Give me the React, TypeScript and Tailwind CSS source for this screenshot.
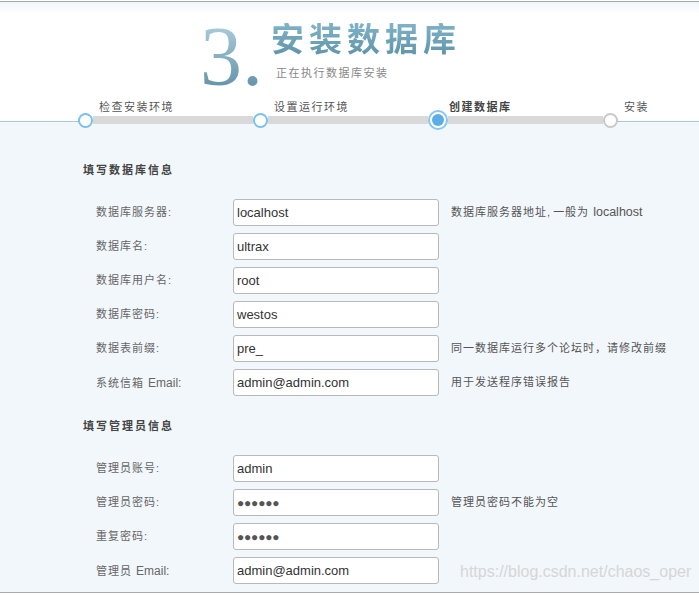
import React from 'react';

type Field = {
  label: React.ReactNode;
  value: string;
  password?: boolean;
  hint?: React.ReactNode;
};

const dbFields: Field[] = [
  {
    label: '数据库服务器:',
    value: 'localhost',
    hint: (
      <>
        数据库服务器地址<span className="tracking-normal">, </span>一般为{' '}
        <span className="text-[12.5px] tracking-normal">localhost</span>
      </>
    ),
  },
  { label: '数据库名:', value: 'ultrax' },
  { label: '数据库用户名:', value: 'root' },
  { label: '数据库密码:', value: 'westos' },
  { label: '数据表前缀:', value: 'pre_', hint: '同一数据库运行多个论坛时，请修改前缀' },
  {
    label: (
      <>
        系统信箱 <span className="text-[12px] tracking-normal">Email:</span>
      </>
    ),
    value: 'admin@admin.com',
    hint: '用于发送程序错误报告',
  },
];

const adminFields: Field[] = [
  { label: '管理员账号:', value: 'admin' },
  { label: '管理员密码:', value: '●●●●●●', password: true, hint: '管理员密码不能为空' },
  { label: '重复密码:', value: '●●●●●●', password: true },
  {
    label: (
      <>
        管理员 <span className="text-[12px] tracking-normal">Email:</span>
      </>
    ),
    value: 'admin@admin.com',
  },
];

const steps = [
  { label: '检查安装环境', current: false },
  { label: '设置运行环境', current: false },
  { label: '创建数据库', current: true },
  { label: '安装', current: false },
];

function FieldRow({ field }: { field: Field }) {
  return (
    <div className="flex h-[27px] items-center">
      <div className="w-[150px] shrink-0 pl-[13px] text-[11px] tracking-[1px] text-[#666]">{field.label}</div>
      <input
        readOnly
        type="text"
        defaultValue={field.value}
        className={
          field.password
            ? 'h-[27px] w-[206px] shrink-0 rounded-[3px] border border-[#b9b9b9] bg-white px-[3px] text-[12px] tracking-[-0.2px] text-[#555] outline-none'
            : 'h-[27px] w-[206px] shrink-0 rounded-[3px] border border-[#b9b9b9] bg-white px-[3px] text-[13px] text-[#333] outline-none'
        }
        style={{ fontFamily: '"Liberation Sans", "DejaVu Sans", Arial, sans-serif' }}
      />
      {field.hint && (
        <div className="ml-[12px] text-[11px] tracking-[1px] text-[#555]">{field.hint}</div>
      )}
    </div>
  );
}

function Section({ title, fields }: { title: string; fields: Field[] }) {
  return (
    <div>
      <h3 className="text-[11px] font-bold leading-[16px] tracking-[2px] text-[#444]">{title}</h3>
      <div className="mt-[21px] flex flex-col gap-[7px]">
        {fields.map((f, i) => (
          <FieldRow key={i} field={f} />
        ))}
      </div>
    </div>
  );
}

function StepDot({ state }: { state: 'done' | 'current' | 'todo' }) {
  if (state === 'current') {
    return (
      <div className="flex h-[20px] w-[20px] shrink-0 items-center justify-center rounded-full border-2 border-[#88c6ef] bg-white">
        <div className="h-[12px] w-[12px] rounded-full bg-[#5aade6]" />
      </div>
    );
  }
  return (
    <div
      className={
        state === 'done'
          ? 'h-[15px] w-[15px] shrink-0 rounded-full border-2 border-[#7cc0ee] bg-white'
          : 'h-[15px] w-[15px] shrink-0 rounded-full border-2 border-[#c9c9c9] bg-white'
      }
    />
  );
}

export default function App() {
  return (
    <div
      className="relative h-[595px] w-full overflow-hidden bg-white"
      style={{ fontFamily: '"Liberation Sans", "Noto Sans CJK SC", sans-serif' }}
    >
      <header className="relative mt-px h-[120px] border-t border-[#a9a9a9] bg-[linear-gradient(to_bottom,#eef5f9,#ffffff_12px)]">
        <div className="flex pl-[200px] pt-[13px]">
          <span
            className="h-[84px] bg-linear-to-b from-[#b6d5e2] to-[#578aa1] bg-clip-text text-[84px] leading-[84px] text-transparent"
            style={{ fontFamily: '"Liberation Serif", serif' }}
          >
            3.
          </span>
          <div className="ml-[8px] pt-[8px]">
            <h1 className="bg-linear-to-b from-[#80b3c7] to-[#5f94aa] bg-clip-text text-[33px] font-bold leading-[33px] tracking-[5px] text-transparent">
              安装数据库
            </h1>
            <p className="mt-[10px] pl-[5px] text-[11px] leading-[14px] tracking-[1.5px] text-[#888]">
              正在执行数据库安装
            </p>
          </div>
        </div>
        <div className="mt-px flex pl-[99px]">
          {steps.map((s) => (
            <div
              key={s.label}
              className={
                s.current
                  ? 'w-[175px] shrink-0 text-[11px] font-bold leading-[14px] tracking-[1.5px] text-[#444]'
                  : 'w-[175px] shrink-0 text-[11px] leading-[14px] tracking-[1.5px] text-[#555]'
              }
            >
              {s.label}
            </div>
          ))}
        </div>
        <div className="absolute left-0 top-[108px] z-10 flex h-[20px] items-center pl-[78px]">
          <StepDot state="done" />
          <div className="h-[8px] w-[160px] bg-[#d9d9d9]" />
          <StepDot state="done" />
          <div className="h-[8px] w-[160px] bg-[#d9d9d9]" />
          <StepDot state="current" />
          <div className="h-[8px] w-[155px] bg-[#d9d9d9]" />
          <StepDot state="todo" />
        </div>
      </header>

      <main className="flex h-[472px] flex-col gap-[21px] border-y border-t-[#a9c9d8] border-b-[#a8a8a8] bg-[#f2f7fb] pl-[83px] pt-[40px]">
        <Section title="填写数据库信息" fields={dbFields} />
        <div className="mt-px">
          <Section title="填写管理员信息" fields={adminFields} />
        </div>
      </main>

      <div className="absolute left-[460px] top-[560px] text-[16px] text-[#d6d6d6]">
        https://blog.csdn.net/chaos_oper
      </div>
    </div>
  );
}
